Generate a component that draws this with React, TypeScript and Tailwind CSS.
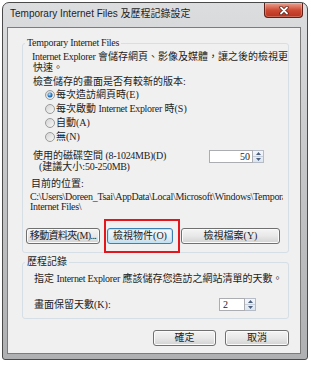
import React from "react";

const body = "font-['Liberation_Serif','Noto_Sans_CJK_TC',serif] text-[10px] text-[#1c1c1c]";

// latin runs are a bit tighter in the original dialog font
function L({ children }: { children: React.ReactNode }) {
  return <span className="tracking-[-0.3px]">{children}</span>;
}

function Radio({ checked }: { checked?: boolean }) {
  return (
    <svg width="10" height="10" viewBox="0 0 10 10" className="shrink-0">
      <defs>
        <linearGradient id="rb" x1="0" y1="0" x2="1" y2="1">
          <stop offset="0" stopColor="#d2d2d2" />
          <stop offset="1" stopColor="#fafafa" />
        </linearGradient>
        <radialGradient id="rd" cx="0.4" cy="0.35" r="0.75">
          <stop offset="0" stopColor="#b5e2ff" />
          <stop offset="0.55" stopColor="#2c7cc6" />
          <stop offset="1" stopColor="#164b8a" />
        </radialGradient>
      </defs>
      <circle cx="5" cy="5" r="4.5" fill="url(#rb)" stroke="#9a9b9c" />
      {checked && <circle cx="5" cy="5" r="2.5" fill="url(#rd)" />}
    </svg>
  );
}

function SpinArrows() {
  return (
    <div className="flex h-full w-[11px] flex-col border border-l-0 border-[#b6bcc6] bg-linear-to-b from-[#f4f7fb] to-[#dde6f0]">
      <div className="flex flex-1 items-center justify-center border-b border-[#c7d0db]">
        <svg width="5" height="3" viewBox="0 0 5 3">
          <path d="M0 3 L2.5 0 L5 3 Z" fill="#4c607e" />
        </svg>
      </div>
      <div className="flex flex-1 items-center justify-center">
        <svg width="5" height="3" viewBox="0 0 5 3">
          <path d="M0 0 L2.5 3 L5 0 Z" fill="#4c607e" />
        </svg>
      </div>
    </div>
  );
}

function Btn({ children, className, focused }: { children: React.ReactNode; className: string; focused?: boolean }) {
  return (
    <div
      className={
        focused
          ? `${className} flex h-[16px] items-center justify-center whitespace-nowrap rounded-[3px] border border-[#3c7fb1] bg-linear-to-b from-[#f3f9fd] via-[#e6f0f7] to-[#c9dcea] shadow-[inset_0_0_0_1px_#bfe3f7] leading-[14px]`
          : `${className} flex h-[16px] items-center justify-center whitespace-nowrap rounded-[3px] border border-[#707070] bg-linear-to-b from-[#f4f4f4] via-[#e8e8e8] to-[#d2d2d2] shadow-[inset_0_0_0_1px_#fbfbfb] leading-[14px]`
      }
    >
      {children}
    </div>
  );
}

const radios = [
  { label: "每次造訪網頁時(E)", checked: true },
  { label: <>每次啟動 <L>Internet Explorer</L> 時(S)</>, checked: false },
  { label: "自動(A)", checked: false },
  { label: "無(N)", checked: false },
];

export default function App() {
  return (
    <div className="h-[366px] w-[311px] bg-white pl-[2px] pt-[2px]">
      <div className="flex h-[358px] w-[306px] flex-col rounded-t-[7px] rounded-b-[3px] border border-[#4a4a4a] bg-linear-to-b from-[#dcdddf] via-[#c3c5c7] to-[#aeb0b2]">
        {/* title bar */}
        <div className="flex h-[24px] items-start justify-between pl-[7px] pr-[4px]">
          <span className="mt-[4px] whitespace-nowrap font-['Liberation_Sans','Noto_Sans_CJK_TC',sans-serif] text-[10px] leading-[14px] text-[#1e1e1e]">
            Temporary Internet Files 及歷程記錄設定
          </span>
          <div className="flex h-[15px] w-[39px] items-center justify-center rounded-b-[4px] border border-t-0 border-[#5e2018] bg-linear-to-b from-[#e6a191] via-[#cf4a33] to-[#b8321d] shadow-[inset_0_0_0_1px_rgba(255,255,255,0.25)]">
            <svg width="10" height="9" viewBox="0 0 10 9">
              <path d="M2 1.5 L8 7.5 M8 1.5 L2 7.5" stroke="#4a1a14" strokeWidth="3.2" strokeLinecap="round" />
              <path d="M2 1.5 L8 7.5 M8 1.5 L2 7.5" stroke="#ffffff" strokeWidth="1.8" strokeLinecap="round" />
            </svg>
          </div>
        </div>

        {/* client area */}
        <div className={`mb-[5px] ml-[4px] mr-[6px] flex flex-1 flex-col border border-[#7c7c7c] bg-[#f0f0f0] ${body}`}>
          <fieldset className="ml-[14px] mt-[9px] w-[267px] rounded-[3px] border border-[#d5dfe5] pb-[8px]">
            <legend className="ml-[2px] h-[12px] px-[2px] leading-[12px]">
              <L>Temporary Internet Files</L>
            </legend>
            <div className="ml-[9px] mt-[2px] h-[11px] whitespace-nowrap leading-[11px]">
              <L>Internet Explorer</L> 會儲存網頁、影像及媒體，讓之後的檢視更
            </div>
            <div className="ml-[10px] h-[11px] leading-[11px]">快速。</div>
            <div className="ml-[10px] mt-[3px] h-[12px] leading-[12px]">檢查儲存的畫面是否有較新的版本:</div>
            {radios.map((r, i) => (
              <div key={i} className="ml-[22px] flex h-[14px] items-center gap-[1px] whitespace-nowrap leading-[14px]">
                <Radio checked={r.checked} />
                <span>{r.label}</span>
              </div>
            ))}
            <div className="mt-[6px] flex items-start">
              <div className="flex flex-col">
                <div className="ml-[10px] h-[11px] whitespace-nowrap leading-[11px]">
                  使用的磁碟空間 <L>(8-1024MB)(D)</L>
                </div>
                <div className="ml-[16px] h-[11px] whitespace-nowrap leading-[11px]">
                  (建議大小:<L>50-250MB)</L>
                </div>
              </div>
              <div className="ml-auto mr-[24px] flex h-[13px]">
                <div className="h-full w-[44px] border border-[#abadb3] bg-white pr-[2px] text-right leading-[11px]">50</div>
                <SpinArrows />
              </div>
            </div>
            <div className="ml-[8px] mt-[6px] h-[11px] leading-[11px]">目前的位置:</div>
            <div className="ml-[7px] mt-[3px] h-[10px] w-[253px] overflow-hidden whitespace-nowrap leading-[10px]">
              <L>C:\Users\Doreen_Tsai\AppData\Local\Microsoft\Windows\Temporary</L>
            </div>
            <div className="ml-[7px] h-[10px] whitespace-nowrap leading-[10px]">
              <L>Internet Files\</L>
            </div>
            <div className="ml-[3px] mt-[16px] flex gap-[7px]">
              <Btn className="w-[74px] tracking-[-0.6px]">移動資料夾(M)...</Btn>
              <div className="relative">
                <Btn className="w-[66px]" focused>
                  檢視物件(O)
                </Btn>
                <div className="absolute left-[-3px] top-[-9px] h-[34px] w-[76px] border-2 border-[#e3161d]" />
              </div>
              <Btn className="ml-[1px] w-[99px]">檢視檔案(Y)</Btn>
            </div>
          </fieldset>

          <fieldset className="ml-[14px] mt-[3px] w-[267px] rounded-[3px] border border-[#d5dfe5] pb-[7px]">
            <legend className="ml-[2px] h-[12px] px-[2px] leading-[12px]">歷程記錄</legend>
            <div className="ml-[11px] mt-[5px] h-[12px] whitespace-nowrap leading-[12px]">
              指定 <L>Internet Explorer</L> 應該儲存您造訪之網站清單的天數。
            </div>
            <div className="mt-[13px] flex h-[13px] items-center">
              <span className="ml-[11px] leading-[13px]">畫面保留天數(K):</span>
              <div className="ml-auto mr-[32px] flex h-[13px]">
                <div className="h-full w-[26px] border border-[#abadb3] bg-white pl-[3px] leading-[11px]">2</div>
                <SpinArrows />
              </div>
            </div>
          </fieldset>

          <div className="mr-[11px] mt-[11px] flex justify-end gap-[9px]">
            <Btn className="w-[63px]">確定</Btn>
            <Btn className="w-[64px]">取消</Btn>
          </div>
        </div>
      </div>
    </div>
  );
}
